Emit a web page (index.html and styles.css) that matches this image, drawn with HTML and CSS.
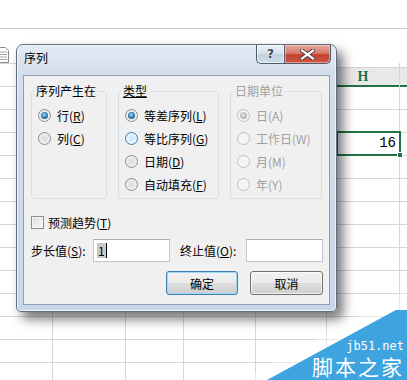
FILE: index.html
```html
<!DOCTYPE html>
<html lang="zh-CN">
<head>
<meta charset="utf-8">
<title>序列</title>
<link rel="stylesheet" href="styles.css">
</head>
<body>
<div class="page">
  <div class="topbar"></div>
  <div class="strip">
    <svg class="docicon" width="9" height="16" viewBox="0 0 9 16"><path d="M-3 0.5H5.5L8.5 3.5V15.5H-3Z" fill="#fff" stroke="#8a8a8a"/><path d="M0 5H7M0 7.5H7M0 10H7M0 12.5H7" stroke="#9aa6b0"/></svg>
  </div>
  <div class="grid">
    <div class="col c1"></div>
    <div class="col c2"></div>
    <div class="col c3"></div>
    <div class="col c4"></div>
    <div class="col c5"></div>
    <div class="col c6"><div class="hd-gap"></div><div class="hd">H</div></div>
    <div class="col c7"><div class="hd-gap"></div><div class="hd"></div></div>
  </div>

  <div class="selcell">16<span class="handle"></span></div>

  <div class="dialog">
    <div class="titlebar">
      <span class="title">序列</span>
      <div class="capbtns">
        <div class="capbtn help">?</div>
        <div class="capbtn close">
          <svg width="15" height="11" viewBox="0 0 15 11"><path d="M2 1.5L13 9.5M13 1.5L2 9.5" stroke="#3b3030" stroke-width="4" stroke-linecap="square"/><path d="M2 1.5L13 9.5M13 1.5L2 9.5" stroke="#fff" stroke-width="2.2" stroke-linecap="square"/></svg>
        </div>
      </div>
    </div>
    <div class="client">
      <div class="groups">
        <fieldset class="grp g1">
          <legend>序列产生在</legend>
          <div class="opts">
            <div class="opt"><span class="radio on"></span><span>行(<u>R</u>)</span></div>
            <div class="opt"><span class="radio"></span><span>列(<u>C</u>)</span></div>
          </div>
        </fieldset>
        <fieldset class="grp g2">
          <legend><u>类型</u></legend>
          <div class="opts">
            <div class="opt"><span class="radio on"></span><span>等差序列(<u>L</u>)</span></div>
            <div class="opt"><span class="radio hover"></span><span>等比序列(<u>G</u>)</span></div>
            <div class="opt"><span class="radio"></span><span>日期(<u>D</u>)</span></div>
            <div class="opt"><span class="radio"></span><span>自动填充(<u>F</u>)</span></div>
          </div>
        </fieldset>
        <fieldset class="grp g3 disabled">
          <legend>日期单位</legend>
          <div class="opts">
            <div class="opt"><span class="radio dis on"></span><span>日(A)</span></div>
            <div class="opt"><span class="radio dis"></span><span>工作日(W)</span></div>
            <div class="opt"><span class="radio dis"></span><span>月(M)</span></div>
            <div class="opt"><span class="radio dis"></span><span>年(Y)</span></div>
          </div>
        </fieldset>
      </div>
      <div class="chkrow"><span class="chk"></span><span>预测趋势(<u>T</u>)</span></div>
      <div class="inrow">
        <span class="lbl">步长值(<u>S</u>):</span>
        <div class="inp"><span class="sel">1</span><span class="caret"></span></div>
        <span class="lbl lbl2">终止值(<u>O</u>):</span>
        <div class="inp"></div>
      </div>
      <div class="btnrow">
        <div class="btn def">确定</div>
        <div class="btn">取消</div>
      </div>
    </div>
  </div>

  <div class="wm-glow"></div>
  <div class="wm">
    <div class="wm-url">jb51.net</div>
    <div class="wm-name">脚本之家</div>
  </div>
</div>
</body>
</html>
```
FILE: styles.css
```css
* { box-sizing: border-box; }
html, body { margin: 0; padding: 0; }
body {
  width: 407px;
  height: 380px;
  overflow: hidden;
  background: #fff;
  font-family: "Noto Sans CJK SC", "Noto Sans", sans-serif;
  font-size: 12px;
  color: #000;
}
.page {
  position: relative;
  width: 407px;
  height: 380px;
  overflow: hidden;
  display: flex;
  flex-direction: column;
}
.topbar {
  height: 29px;
  flex: none;
  border-bottom: 1px solid #c6c6c6;
}
.strip {
  height: 34px;
  flex: none;
}
.docicon { display: block; margin-top: 18px; }
.grid {
  flex: 1;
  display: flex;
  border-top: 1px solid #d6d6d6;
  background: repeating-linear-gradient(to bottom, transparent 0 22px, #d6d6d6 22px 23px);
}
.col { flex: none; border-right: 1px solid #d6d6d6; }
.c1 { width: 53px; }
.c2 { width: 73px; }
.c3 { width: 58px; }
.c4 { width: 72px; }
.c5 { width: 71px; }
.c6 { width: 73px; }
.c7 { flex: 1; border-right: 0; }
.hd-gap {
  height: 4px;
  margin-top: -1px;
  background: #fff;
}
.hd {
  height: 20px;
  border-top: 1px solid #d2d2d2;
  border-bottom: 2px solid #217346;
  background: #e9e9e9;
  color: #217346;
  font-family: "Liberation Serif", serif;
  font-weight: bold;
  font-size: 14px;
  line-height: 17px;
  text-align: center;
}

.selcell {
  position: absolute;
  left: 336px;
  top: 131px;
  width: 65px;
  height: 25px;
  border: 2px solid #217346;
  font-family: "Liberation Mono", monospace;
  font-size: 14px;
  line-height: 21px;
  text-align: right;
  padding-right: 3px;
}
.handle {
  position: absolute;
  right: -4px;
  bottom: -4px;
  width: 6px;
  height: 6px;
  background: #217346;
  border: 1px solid #fff;
}

/* dialog */
.dialog {
  position: absolute;
  left: 16px;
  top: 44px;
  width: 321px;
  height: 268px;
  border: 1px solid #5f6d7e;
  border-radius: 7px 7px 5px 5px;
  background: linear-gradient(to bottom, #e2eaf4 0, #d3deeb 30px, #c8d6e7 100%);
  box-shadow: 6px 7px 12px rgba(0, 0, 0, 0.55), inset 0 0 0 1px rgba(255, 255, 255, 0.65);
  display: flex;
  flex-direction: column;
}
.titlebar {
  height: 30px;
  flex: none;
  display: flex;
  justify-content: space-between;
  align-items: flex-start;
}
.title {
  padding: 5px 0 0 7px;
  line-height: 16px;
  color: #000;
}
.capbtns {
  display: flex;
  margin-right: 5px;
}
.capbtn {
  height: 19px;
  display: flex;
  align-items: center;
  justify-content: center;
  border: 1px solid #4e5b6b;
  border-top: 0;
}
.help {
  width: 28px;
  border-right: 0;
  border-radius: 0 0 0 5px;
  background: linear-gradient(to bottom, #eaf0f6 0, #d6e0eb 48%, #c3d0df 52%, #cfdbe8 100%);
  box-shadow: inset 0 0 0 1px rgba(255, 255, 255, 0.6);
  font-family: "DejaVu Sans", sans-serif;
  font-weight: bold;
  font-size: 12px;
  color: #3b4756;
  text-shadow: 0 0 2px #fff;
  line-height: 1;
}
.close {
  width: 47px;
  border-radius: 0 0 5px 0;
  background: linear-gradient(to bottom, #e9aa9d 0, #d97a68 45%, #c4402e 55%, #cc5a44 100%);
  box-shadow: inset 0 0 0 1px rgba(255, 220, 210, 0.5);
}
.close svg { display: block; }

.client {
  flex: none;
  height: 230px;
  margin: 0 6px;
  background: #f0f0f0;
  border: 1px solid #8da0b6;
  padding: 7px 0 0 7px;
}
.groups {
  display: flex;
  gap: 11px;
}
.grp {
  margin: 0;
  padding: 0 0 0 2px;
  height: 116px;
  border: 1px solid #d5dfe5;
  border-radius: 3px;
  min-width: 0;
}
.grp legend {
  padding: 0 2px;
  margin: 0;
  line-height: 16px;
}
.g1 { width: 76px; }
.g2 { width: 101px; }
.g3 { width: 92px; }
.disabled { color: #a0a0a0; }
.opts {
  padding: 5px 0 0 4px;
}
.opt {
  height: 23px;
  display: flex;
  align-items: center;
  gap: 6px;
  white-space: nowrap;
}
.radio {
  flex: none;
  position: relative;
  width: 13px;
  height: 13px;
  border-radius: 50%;
  border: 1px solid #8b8b8b;
  background: radial-gradient(circle at 50% 50%, #dadada 0, #e8e8e8 45%, #fbfbfb 100%);
}
.radio.on::after {
  content: "";
  position: absolute;
  left: 2px;
  top: 2px;
  width: 7px;
  height: 7px;
  border-radius: 50%;
  background: radial-gradient(circle at 45% 40%, #b5e6f7 0, #3b8cbd 40%, #1b4a6b 100%);
}
.radio.hover {
  border-color: #3c7fb1;
  background: radial-gradient(circle at 50% 50%, #c8e9fa 0, #def2fc 50%, #f4fbff 100%);
}
.radio.dis {
  border-color: #c0c0c0;
  background: #f4f4f4;
}
.radio.dis.on::after {
  background: radial-gradient(circle at 45% 40%, #e0e0e0 0, #b9b9b9 60%, #a9a9a9 100%);
}

.chkrow {
  margin-top: 12px;
  height: 22px;
  display: flex;
  align-items: center;
  gap: 4px;
}
.chk {
  flex: none;
  width: 13px;
  height: 13px;
  border: 1px solid #8f8f8f;
  background: linear-gradient(135deg, #d8d8d8 0, #f0f0f0 60%, #fdfdfd 100%);
  box-shadow: inset 0 0 0 1px #f4f4f4;
}
.inrow {
  margin-top: 6px;
  height: 23px;
  display: flex;
  align-items: center;
}
.lbl { width: 62px; white-space: nowrap; }
.lbl2 { width: 66px; margin-left: 10px; }
.inp {
  width: 77px;
  height: 23px;
  border: 1px solid #c2c5cb;
  border-top-color: #abadb3;
  background: #fff;
  display: flex;
  align-items: center;
  padding-left: 3px;
}
.sel {
  background: #c9c9c9;
  line-height: 15px;
  padding: 0 1px;
}
.caret {
  width: 1px;
  height: 15px;
  background: #000;
}
.btnrow {
  margin-top: 9px;
  display: flex;
  justify-content: flex-end;
  gap: 12px;
  padding-right: 6px;
}
.btn {
  width: 73px;
  height: 24px;
  border: 1px solid #707070;
  border-radius: 3px;
  background: linear-gradient(to bottom, #f2f2f2 0, #ebebeb 48%, #dddddd 52%, #cfcfcf 100%);
  box-shadow: inset 0 0 0 1px rgba(255, 255, 255, 0.7);
  display: flex;
  align-items: center;
  justify-content: center;
}
.btn.def {
  width: 72px;
  border-color: #3c7fb1;
  box-shadow: inset 0 0 0 1px #9fd9f4;
}

/* watermark */
.wm-glow {
  position: absolute;
  left: 241px;
  top: 290px;
  width: 166px;
  height: 90px;
  clip-path: polygon(0 100%, 100% 0, 100% 100%);
  background: linear-gradient(152deg, rgba(255, 255, 255, 0) 30%, rgba(255, 255, 255, 0.85) 75%);
}
.wm {
  position: absolute;
  left: 267px;
  top: 310px;
  width: 140px;
  height: 70px;
  clip-path: polygon(92% 0, 100% 0, 100% 100%, 0 100%);
  background: #3ea4df;
  color: #fff;
  display: flex;
  flex-direction: column;
  align-items: flex-end;
  justify-content: flex-end;
  padding: 0 3px 3px 0;
}
.wm-url {
  font-family: "DejaVu Sans Mono", monospace;
  font-size: 12px;
  line-height: 12px;
  margin-bottom: 4px;
}
.wm-name {
  font-family: "Noto Sans CJK SC", sans-serif;
  font-size: 21px;
  line-height: 21px;
  letter-spacing: 2px;
}
```
